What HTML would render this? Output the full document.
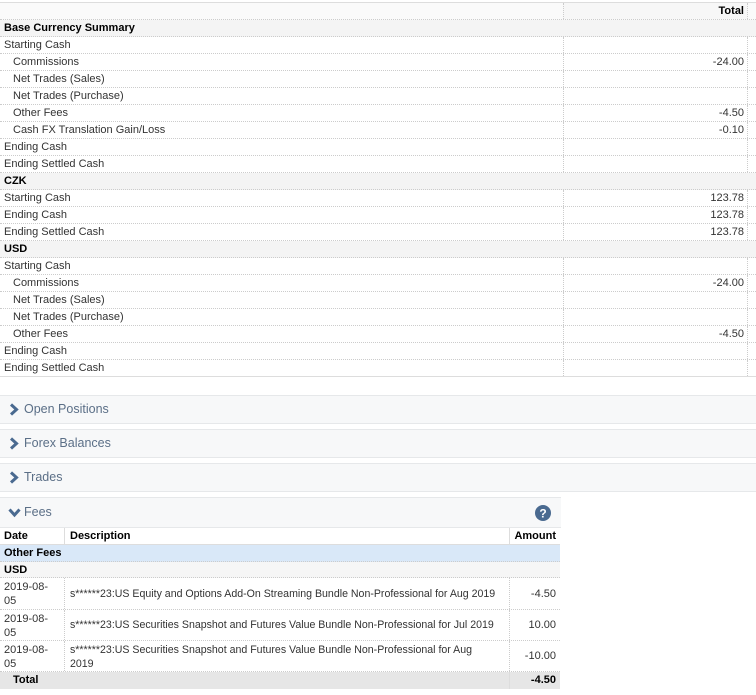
<!DOCTYPE html><html><head><style>
body{margin:0;width:756px;height:695px;background:#fff;font-family:"Liberation Sans",sans-serif;font-size:11px;color:#333;position:relative;overflow:hidden}
.r{position:absolute;left:0;width:756px;height:17px;border-bottom:1px dotted #ccc;box-sizing:border-box;line-height:17px}
.r .l{position:absolute;left:4px}
.r .i{left:13px}
.r .v{position:absolute;left:563px;width:185px;height:16px;border-left:1px dotted #ccc;border-right:1px dotted #ccc;text-align:right;box-sizing:border-box;padding-right:3px}
.s{background:#f4f4f4;font-weight:bold;color:#000}
.p{position:absolute;left:0;width:756px;height:29px;background:#f7f8f9;border-top:1px solid #e6e8ea;border-bottom:1px solid #e6e8ea;box-sizing:border-box;color:#5b6f87;font-size:12.5px;line-height:27px}
.p span{position:absolute;left:24px}
.p svg{position:absolute;left:8px;top:7px}
.f{position:absolute;left:0;width:560px;box-sizing:border-box;border-bottom:1px dotted #ccc}
.f .d{position:absolute;left:4px}
.f .e{position:absolute;left:64px;width:445px;padding-left:5px;height:100%;border-left:1px dotted #ccc;box-sizing:border-box;font-size:10.6px}
.f .a{position:absolute;left:509px;width:51px;height:100%;border-left:1px dotted #ccc;text-align:right;padding-right:4px;box-sizing:border-box}
</style></head><body>
<div style="position:absolute;left:0;top:2px;width:756px;border-top:1px solid #ddd"></div>
<div class="r" style="top:3px;background:#fafafa"><span class="v" style="font-weight:bold;color:#000;background:#f7f7f7">Total</span></div>
<div class="r s" style="top:20px"><span class="l">Base Currency Summary</span></div>
<div class="r" style="top:37px"><span class="l">Starting Cash</span><span class="v"></span></div>
<div class="r" style="top:54px"><span class="l i">Commissions</span><span class="v">-24.00</span></div>
<div class="r" style="top:71px"><span class="l i">Net Trades (Sales)</span><span class="v"></span></div>
<div class="r" style="top:88px"><span class="l i">Net Trades (Purchase)</span><span class="v"></span></div>
<div class="r" style="top:105px"><span class="l i">Other Fees</span><span class="v">-4.50</span></div>
<div class="r" style="top:122px"><span class="l i">Cash FX Translation Gain/Loss</span><span class="v">-0.10</span></div>
<div class="r" style="top:139px"><span class="l">Ending Cash</span><span class="v"></span></div>
<div class="r" style="top:156px"><span class="l">Ending Settled Cash</span><span class="v"></span></div>
<div class="r s" style="top:173px"><span class="l">CZK</span></div>
<div class="r" style="top:190px"><span class="l">Starting Cash</span><span class="v">123.78</span></div>
<div class="r" style="top:207px"><span class="l">Ending Cash</span><span class="v">123.78</span></div>
<div class="r" style="top:224px"><span class="l">Ending Settled Cash</span><span class="v">123.78</span></div>
<div class="r s" style="top:241px"><span class="l">USD</span></div>
<div class="r" style="top:258px"><span class="l">Starting Cash</span><span class="v"></span></div>
<div class="r" style="top:275px"><span class="l i">Commissions</span><span class="v">-24.00</span></div>
<div class="r" style="top:292px"><span class="l i">Net Trades (Sales)</span><span class="v"></span></div>
<div class="r" style="top:309px"><span class="l i">Net Trades (Purchase)</span><span class="v"></span></div>
<div class="r" style="top:326px"><span class="l i">Other Fees</span><span class="v">-4.50</span></div>
<div class="r" style="top:343px"><span class="l">Ending Cash</span><span class="v"></span></div>
<div class="r" style="top:360px;border-bottom:1px solid #ddd"><span class="l">Ending Settled Cash</span><span class="v"></span></div>

<div class="p" style="top:395px"><svg width="13" height="13" viewBox="0 0 13 13"><path d="M3 1.5L8.5 6.5L3 11.5" stroke="#4a6a90" stroke-width="3" fill="none"/></svg><span>Open Positions</span></div>
<div class="p" style="top:429px"><svg width="13" height="13" viewBox="0 0 13 13"><path d="M3 1.5L8.5 6.5L3 11.5" stroke="#4a6a90" stroke-width="3" fill="none"/></svg><span>Forex Balances</span></div>
<div class="p" style="top:463px"><svg width="13" height="13" viewBox="0 0 13 13"><path d="M3 1.5L8.5 6.5L3 11.5" stroke="#4a6a90" stroke-width="3" fill="none"/></svg><span>Trades</span></div>
<div class="p" style="top:497px;width:561px;height:31px;line-height:29px"><svg width="13" height="13" viewBox="0 0 13 13" style="top:8px"><path d="M1.5 3.5L6.5 9L11.5 3.5" stroke="#4a6a90" stroke-width="3" fill="none"/></svg><span>Fees</span>
<svg width="16" height="16" viewBox="0 0 16 16" style="left:535px;top:7px"><circle cx="8" cy="8" r="8" fill="#4a6a90"/><text x="8" y="12.5" text-anchor="middle" font-size="12" font-weight="bold" fill="#fff" font-family="Liberation Sans">?</text></svg></div>

<div class="f" style="top:528px;height:17px;line-height:16px;font-weight:bold;color:#000;border-bottom:1px solid #ddd"><span class="d">Date</span><span class="e" style="border-left:1px solid #ddd;font-size:11px">Description</span><span class="a" style="border-left:1px solid #ddd">Amount</span></div>
<div class="f" style="top:545px;height:17px;line-height:17px;background:#d9e8f8;font-weight:bold;color:#000"><span class="d">Other Fees</span></div>
<div class="f" style="top:562px;height:16px;line-height:16px;background:#f6f6f6;font-weight:bold;color:#000"><span class="d">USD</span></div>
<div class="f" style="top:578px;height:32px"><span class="d" style="top:2px;line-height:14px">2019-08-<br>05</span><span class="e" style="line-height:32px;white-space:nowrap">s******23:US Equity and Options Add-On Streaming Bundle Non-Professional for Aug 2019</span><span class="a" style="line-height:32px">-4.50</span></div>
<div class="f" style="top:610px;height:31px"><span class="d" style="top:2px;line-height:14px">2019-08-<br>05</span><span class="e" style="line-height:31px;white-space:nowrap">s******23:US Securities Snapshot and Futures Value Bundle Non-Professional for Jul 2019</span><span class="a" style="line-height:31px">10.00</span></div>
<div class="f" style="top:641px;height:31px"><span class="d" style="top:2px;line-height:14px">2019-08-<br>05</span><span class="e" style="line-height:14px;padding-top:2px">s******23:US Securities Snapshot and Futures Value Bundle Non-Professional for Aug<br>2019</span><span class="a" style="line-height:31px">-10.00</span></div>
<div class="f" style="top:672px;height:17px;line-height:17px;background:#e6e6e6;font-weight:bold;color:#000;border:none"><span class="d" style="left:13px">Total</span><span class="a" style="border-left:1px solid #ddd">-4.50</span></div>
</body></html>
